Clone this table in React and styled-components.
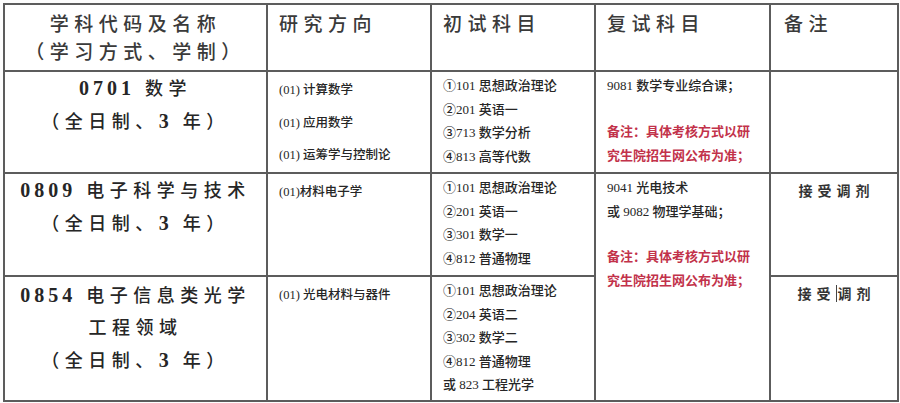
import * as React from 'react'
import styled, { createGlobalStyle } from 'styled-components'

const GlobalStyle = createGlobalStyle`
	html, body {
		margin: 0;
		padding: 0;
		background: #fdfdfd;
	}
	body {
		font-family: "Liberation Serif", "Noto Sans CJK SC", serif;
		color: #222;
	}
`

const Page = styled.main`
	padding: 3px 0 0 3px;
	width: 900px;
	height: 403px;
	box-sizing: border-box;
	overflow: hidden;
`

const Table = styled.table`
	border-collapse: collapse;
	table-layout: fixed;
	width: 894px;
	background: #fff;
`

const Cell = styled.td`
	border: 2px solid #5c5c5c;
	vertical-align: top;
	padding: ${p => p.$pad || '2px 0 0 11px'};
	height: ${p => p.$h}px;
	box-sizing: border-box;
	text-align: ${p => (p.$center ? 'center' : 'left')};
`

const HeadCell = styled(Cell).attrs({ as: 'th' })`
	font-weight: 500;
	color: #3a3a3a;
	font-size: 19px;
	line-height: 28px;
	letter-spacing: 5.5px;
	padding-top: 6px;
`

const Major = styled.div`
	font-size: 18px;
	line-height: 32px;
	letter-spacing: 5.5px;
	font-weight: 500;
	color: #262626;
	padding-top: ${p => p.$top || 0}px;
`

const Digits = styled.span`
	font-size: 20px;
	font-weight: 700;
	letter-spacing: 4px;
`

const Direction = styled.div`
	font-size: 12.5px;
	line-height: 31.5px;
	font-weight: 500;
	color: #262626;
	padding-top: 1px;
`

const Subject = styled.div`
	font-size: 13px;
	line-height: 23.5px;
	font-weight: 500;
	color: #262626;
`

const Note = styled.div`
	font-size: 13px;
	line-height: 24px;
	font-weight: 600;
	color: #c2324a;
	margin-top: ${p => p.$gap}px;
`

const Remark = styled.div`
	font-size: 14px;
	line-height: 24px;
	letter-spacing: 5px;
	font-weight: 600;
	color: #333;
	padding-top: ${p => p.$top}px;
	padding-left: 5px;
`

const Caret = styled.span`
	display: inline-block;
	width: 1px;
	height: 17px;
	background: #444;
	vertical-align: -3px;
	margin-right: 1px;
`

const Lines = ({ items, as: Comp = Subject }) => items.map(t => <Comp key={t}>{t}</Comp>)

const App = () => (
	<Page>
		<GlobalStyle />
		<Table>
			<colgroup>
				<col style={{ width: 263 }} />
				<col style={{ width: 164 }} />
				<col style={{ width: 164 }} />
				<col style={{ width: 175 }} />
				<col style={{ width: 128 }} />
			</colgroup>
			<tbody>
				<tr>
					<HeadCell $h={67} $center $pad="6px 0 0 0">
						学科代码及名称
						<br />
						（学习方式、学制）
					</HeadCell>
					<HeadCell $h={67}>研究方向</HeadCell>
					<HeadCell $h={67}>初试科目</HeadCell>
					<HeadCell $h={67}>复试科目</HeadCell>
					<HeadCell $h={67} $pad="6px 0 0 13px">备注</HeadCell>
				</tr>
				<tr>
					<Cell $h={102} $center $pad="0">
						<Major><Digits>0701</Digits> 数学</Major>
						<Major>（全日制、<Digits>3</Digits> 年）</Major>
					</Cell>
					<Cell $h={102}>
						<Lines as={Direction} items={['(01) 计算数学', '(01) 应用数学', '(01) 运筹学与控制论']} />
					</Cell>
					<Cell $h={102}>
						<Lines items={['①101 思想政治理论', '②201 英语一', '③713 数学分析', '④813 高等代数']} />
					</Cell>
					<Cell $h={102}>
						<Subject>9081 数学专业综合课；</Subject>
						<Note $gap={22}>
							备注：具体考核方式以研
							<br />
							究生院招生网公布为准；
						</Note>
					</Cell>
					<Cell $h={102} />
				</tr>
				<tr>
					<Cell $h={103} $center $pad="0">
						<Major><Digits>0809</Digits> 电子科学与技术</Major>
						<Major>（全日制、<Digits>3</Digits> 年）</Major>
					</Cell>
					<Cell $h={103}>
						<Direction>(01)材料电子学</Direction>
					</Cell>
					<Cell $h={103}>
						<Lines items={['①101 思想政治理论', '②201 英语一', '③301 数学一', '④812 普通物理']} />
					</Cell>
					<Cell $h={228} rowSpan={2}>
						<Subject>9041 光电技术</Subject>
						<Subject>或 9082 物理学基础；</Subject>
						<Note $gap={22}>
							备注：具体考核方式以研
							<br />
							究生院招生网公布为准；
						</Note>
					</Cell>
					<Cell $h={103} $center $pad="0">
						<Remark $top={6}>接受调剂</Remark>
					</Cell>
				</tr>
				<tr>
					<Cell $h={125} $center $pad="0">
						<Major $top={2}><Digits>0854</Digits> 电子信息类光学</Major>
						<Major>工程领域</Major>
						<Major>（全日制、<Digits>3</Digits> 年）</Major>
					</Cell>
					<Cell $h={125}>
						<Direction>(01) 光电材料与器件</Direction>
					</Cell>
					<Cell $h={125}>
						<Lines items={['①101 思想政治理论', '②204 英语二', '③302 数学二', '④812 普通物理', '或 823 工程光学']} />
					</Cell>
					<Cell $h={125} $center $pad="0">
						<Remark $top={6}>
							接受<Caret />调剂
						</Remark>
					</Cell>
				</tr>
			</tbody>
		</Table>
	</Page>
)

export default App
